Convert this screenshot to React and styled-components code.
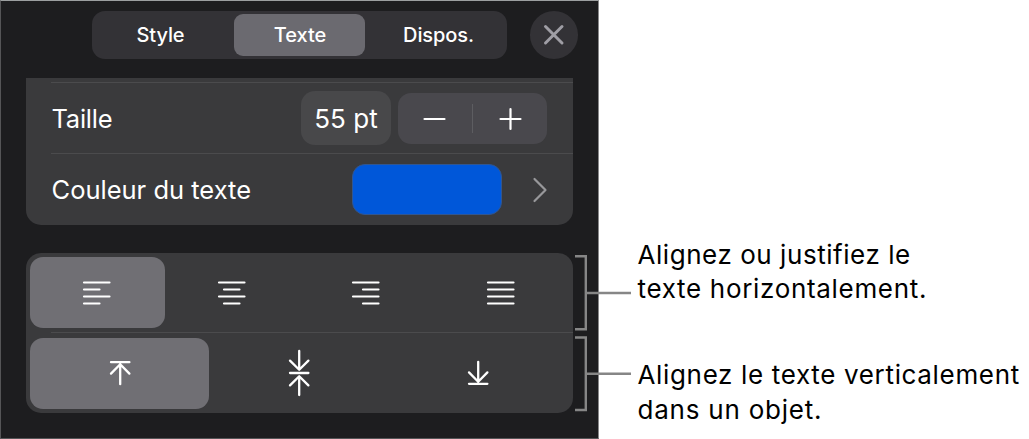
import styled, { createGlobalStyle } from "styled-components";

const GlobalStyle = createGlobalStyle`
  * {
    box-sizing: border-box;
  }

  body {
    margin: 0;
    background: #ffffff;
    font-family: Inter, "Liberation Sans", sans-serif;
  }

  button {
    border: none;
    padding: 0;
    background: none;
    color: inherit;
    font-family: inherit;
  }
`;

const Page = styled.main`
  position: relative;
  display: flex;
  width: 1029px;
  height: 439px;
  overflow: hidden;
`;

const Panel = styled.section`
  width: 599px;
  height: 439px;
  padding: 10px 25px 0 24.5px;
  border: 1px solid #555557;
  border-top-color: #9c9fa0;
  border-right-color: #88888a;
  background: #1d1d1f;
  color: #ffffff;
`;

const Header = styled.header`
  display: flex;
  gap: 23px;
  padding-left: 66.5px;
  margin-right: -6px;
`;

const Tabs = styled.nav`
  display: flex;
  flex-shrink: 0;
  width: 415px;
  height: 47.5px;
  padding: 2.5px 0 3px;
  border-radius: 13px;
  background: #333236;
`;

const Tab = styled.button`
  flex: ${({ $width }) => `0 0 ${$width}px`};
  padding: ${({ $padding }) => $padding || 0};
  border-radius: 9px;
  background: ${({ $active }) => ($active ? "#6b6a70" : "transparent")};
  font-size: 20px;
  font-weight: 500;
  letter-spacing: ${({ $spacing }) => $spacing || 0}px;
`;

const CloseButton = styled.button`
  display: flex;
  flex-shrink: 0;
  align-items: center;
  justify-content: center;
  width: 48px;
  height: 47.5px;
  border-radius: 50%;
  background: #333236;
`;

const Card = styled.div`
  border-radius: ${({ $cut }) => ($cut ? "0 0 15px 15px" : "15px")};
  background: #3a3a3c;
`;

const TextCard = styled(Card)`
  height: 146.5px;
  margin-top: 19.5px;
  padding-top: 4px;
`;

const AlignCard = styled(Card)`
  height: 160.5px;
  margin-top: 28px;
`;

const Separator = styled.div`
  height: 1px;
  margin-left: 25.5px;
  background: #4b4b4d;
`;

const Row = styled.div`
  display: flex;
  align-items: center;
  height: ${({ $height }) => $height}px;
  padding: 0 26px;
`;

const Label = styled.span`
  flex: 1;
  font-size: 25.5px;
  letter-spacing: ${({ $spacing }) => $spacing || 0}px;
`;

const SizeField = styled.div`
  display: flex;
  align-items: center;
  justify-content: center;
  width: 90px;
  height: 54px;
  margin-right: 6.5px;
  border-radius: 14px;
  background: #48484a;
  font-size: 26px;
`;

const Stepper = styled.div`
  display: flex;
  align-items: center;
  width: 149.5px;
  height: 50.5px;
  margin-top: 1px;
  border-radius: 13px;
  background: #49484d;
`;

const StepButton = styled.button`
  display: flex;
  flex: 1;
  align-items: center;
  justify-content: center;
`;

const StepDivider = styled.div`
  width: 1px;
  height: 29px;
  background: #5d5d61;
`;

const Swatch = styled.div`
  width: 150px;
  height: 51px;
  margin-right: 31px;
  border: 1px solid #32568f;
  border-radius: 13px;
  background: #0057d9;
`;

const Options = styled.div`
  display: flex;
  padding: ${({ $padding }) => $padding};
`;

const Option = styled.button`
  display: flex;
  flex: ${({ $width }) => `0 0 ${$width}px`};
  align-items: center;
  justify-content: center;
  height: 71px;
  border-radius: 13px;
  background: ${({ $active }) => ($active ? "#706f74" : "transparent")};
`;

const Icon = styled.svg`
  display: block;
  overflow: visible;
  fill: none;
  stroke: ${({ $color }) => $color || "#ffffff"};
  stroke-width: ${({ $stroke }) => $stroke || 2.2};
  stroke-linecap: round;
  stroke-linejoin: round;
`;

const Callouts = styled.aside`
  display: flex;
  flex-direction: column;
  gap: 51.5px;
  padding: 237.5px 0 0 38.5px;
`;

const Callout = styled.p`
  margin: 0;
  color: #000000;
  font-size: 26px;
  line-height: 34.5px;
  white-space: nowrap;
`;

const Line = styled.span`
  display: block;
  letter-spacing: ${({ $spacing }) => $spacing || 0}px;
`;

const Leaders = styled.svg`
  position: absolute;
  top: 250px;
  left: 570px;
  fill: none;
  stroke: #868686;
  stroke-width: 2.4;
`;

const horizontal = [
  { name: "left", d: "M1 1.5H26.5M1 8.5H16.5M1 15.5H26.5M1 22.5H16.5" },
  { name: "center", d: "M1 1.5H26.5M6 8.5H21.5M1 15.5H26.5M6 22.5H21.5" },
  { name: "right", d: "M1 1.5H26.5M11 8.5H26.5M1 15.5H26.5M11 22.5H26.5" },
  { name: "justify", d: "M1 1.5H26.5M1 8.5H26.5M1 15.5H26.5M1 22.5H26.5" },
];

const vertical = [
  { name: "top", height: 26, d: "M1 1.2H19.4M10.2 23.2V3M1 12.6L10.2 3.2L19.4 12.6" },
  {
    name: "middle",
    height: 48,
    d: "M1 23H19.4M10.2 1V19.5M1 10.6L10.2 19.8L19.4 10.6M10.2 45V26.5M1 35.4L10.2 26.2L19.4 35.4",
  },
  { name: "bottom", height: 26, d: "M1 22.8H19.4M10.2 .8V21M1 11.4L10.2 20.8L19.4 11.4" },
];

export default function App() {
  return (
    <>
      <GlobalStyle />
      <Page>
        <Panel>
          <Header>
            <Tabs>
              <Tab $width={142} $padding="0 5px 0 0" $spacing={-0.1}>
                Style
              </Tab>
              <Tab $width={131} $padding="0 0 0 1px" $active>
                Texte
              </Tab>
              <Tab $width={142} $padding="0 0 0 5px" $spacing={-0.1}>
                Dispos.
              </Tab>
            </Tabs>
            <CloseButton aria-label="Fermer">
              <Icon width="20" height="20" $color="#9f9ea5" $stroke={3}>
                <path d="M1.5 1.5L18 18M18 1.5L1.5 18" />
              </Icon>
            </CloseButton>
          </Header>

          <TextCard $cut>
            <Separator />
            <Row $height={70}>
              <Label $spacing={-0.25}>Taille</Label>
              <SizeField>55 pt</SizeField>
              <Stepper>
                <StepButton aria-label="Diminuer">
                  <Icon width="22" height="22">
                    <path d="M.5 11H20.5" />
                  </Icon>
                </StepButton>
                <StepDivider />
                <StepButton aria-label="Augmenter">
                  <Icon width="22" height="22">
                    <path d="M1.5 11H21.5M11.5 1V21" />
                  </Icon>
                </StepButton>
              </Stepper>
            </Row>
            <Separator />
            <Row $height={71}>
              <Label>Couleur du texte</Label>
              <Swatch />
              <Icon width="14" height="24" $color="#98989b">
                <path d="M1.5 1L12.5 12L1.5 23" />
              </Icon>
            </Row>
          </TextCard>

          <AlignCard>
            <Options $padding="4.5px 4px 4px 4.5px">
              {horizontal.map(({ name, d }, i) => (
                <Option key={name} aria-label={name} $width={134.5} $active={i === 0}>
                  <Icon width="28" height="23">
                    <path d={d} />
                  </Icon>
                </Option>
              ))}
            </Options>
            <Separator />
            <Options $padding="5px 4px 4px 4.5px">
              {vertical.map(({ name, height, d }, i) => (
                <Option key={name} aria-label={name} $width={179} $active={i === 0}>
                  <Icon width="19.8" height={height} $stroke={2.3}>
                    <path d={d} />
                  </Icon>
                </Option>
              ))}
            </Options>
          </AlignCard>
        </Panel>

        <Callouts>
          <Callout>
            <Line $spacing={0.55}>Alignez ou justifiez le</Line>
            <Line $spacing={0.68}>texte horizontalement.</Line>
          </Callout>
          <Callout>
            <Line $spacing={0.66}>Alignez le texte verticalement</Line>
            <Line $spacing={0.78}>dans un objet.</Line>
          </Callout>
        </Callouts>

        <Leaders width="64" height="164">
          <path d="M5 6.2H15.8V79.3H5M17 43H61" />
          <path d="M5 87.5H15.8V160H5M17 123.7H61" />
        </Leaders>
      </Page>
    </>
  );
}
